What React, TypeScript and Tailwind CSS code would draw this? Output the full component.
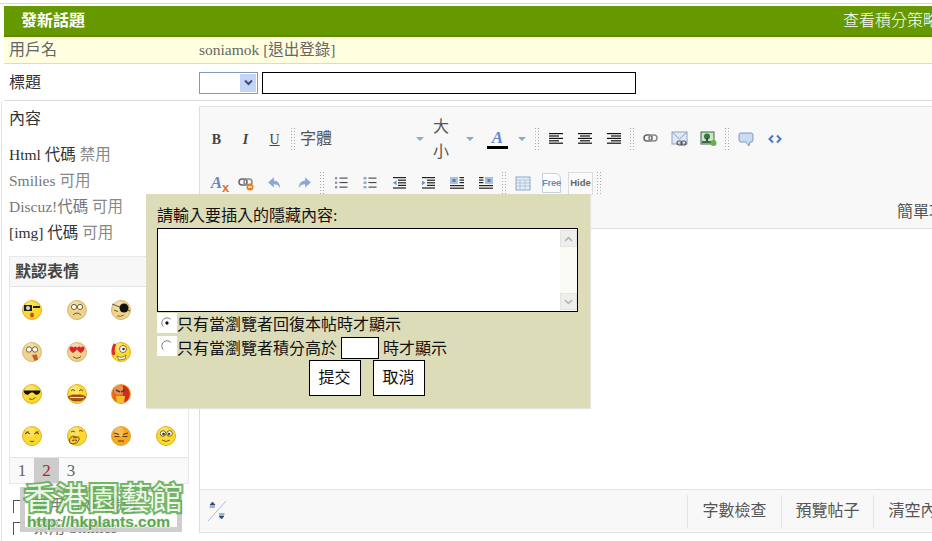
const sep = <span className="mx-[1px] h-[24px] w-[6px] shrink-0 bg-[radial-gradient(#aaa_0.7px,transparent_0.8px)] bg-[length:3px_3px]" />;

function Btn({ children }: { children?: React.ReactNode }) {
  return <div className="flex h-[24px] w-[29px] shrink-0 items-center justify-center">{children}</div>;
}

function Caret() {
  return <span className="h-0 w-0 border-x-[4px] border-t-[4px] border-x-transparent border-t-[#7fb0d0]" />;
}

function Lines({ rows }: { rows: [number, number][] }) {
  return (
    <svg width="16" height="14" viewBox="0 0 16 14">
      {rows.map(([x, w], i) => (
        <rect key={i} x={x} y={1 + i * 2.4} width={w} height="1.2" fill="#111" />
      ))}
    </svg>
  );
}

function Chain({ badge }: { badge?: boolean }) {
  return (
    <svg width="16" height="16" viewBox="0 0 16 16">
      <rect x="1" y="4" width="8" height="6" rx="3" fill="none" stroke="#666" strokeWidth="1.5" />
      <rect x="6" y="4" width="8" height="6" rx="3" fill="none" stroke="#888" strokeWidth="1.5" />
      {badge && <circle cx="12" cy="12" r="3.5" fill="#e8801c" />}
      {badge && <rect x="10" y="11.4" width="4" height="1.2" fill="#fff" />}
    </svg>
  );
}

function Arrow({ flip }: { flip?: boolean }) {
  return (
    <svg width="16" height="16" viewBox="0 0 14 14" className={flip ? "-scale-x-100" : ""}>
      <path d="M6 2 1 6.5 6 11V8.2c2.600 0 4.200.9 5.500 3.300C11.500 7.500 9.500 5 6 4.800Z" fill="#8aa8d8" />
    </svg>
  );
}

function ListIcon({ numbered }: { numbered?: boolean }) {
  return (
    <svg width="16" height="14" viewBox="0 0 16 14">
      {[1, 5.5, 10].map((y) => (
        <g key={y}>
          <rect x={numbered ? 2 : 1.5} y={y} width={numbered ? 2.2 : 3} height="2.4" fill={numbered ? "#8a94a8" : "#8fa8c8"} />
          <rect x="6.500" y={y + 0.6} width="8" height="1" fill="#333" />
        </g>
      ))}
    </svg>
  );
}

function IndentIcon({ out }: { out?: boolean }) {
  return (
    <svg width="16" height="14" viewBox="0 0 16 14">
      {[1, 3.6, 6.2, 8.8, 11.4].map((y, i) => (
        <rect key={y} x={i > 0 && i < 4 ? 7 : 2} y={y} width={i > 0 && i < 4 ? 8 : 13} height="1.2" fill="#222" />
      ))}
      <path d={out ? "M2 6.800 5.500 4.400v4.800Z" : "M5.500 6.800 2 4.400v4.800Z"} fill="#6c8ec0" />
    </svg>
  );
}

function FloatIcon({ right }: { right?: boolean }) {
  return (
    <svg width="16" height="14" viewBox="0 0 16 14">
      <rect x={right ? 7 : 1} y="1" width="8" height="7" fill="#a8c0e0" />
      <rect x={right ? 9.5 : 3.5} y="3" width="3" height="3" fill="#5c80b8" />
      {[1, 3.5, 6].map((y) => (
        <rect key={y} x={right ? 1 : 10.5} y={y} width="4.5" height="1.2" fill="#222" />
      ))}
      <rect x="1" y="9" width="14" height="1.2" fill="#222" />
      <rect x="1" y="11.6" width="14" height="1.2" fill="#222" />
    </svg>
  );
}

type Kind = "camera" | "sad" | "patch" | "tongue" | "love" | "hurt" | "shades" | "lips" | "angry" | "lash" | "hand" | "squint" | "smile";

function Smiley({ kind }: { kind: Kind }) {
  const pale = kind === "sad" || kind === "patch" || kind === "tongue" || kind === "love";
  const fill = pale ? "#efd28c" : kind === "angry" ? "#e8681c" : kind === "squint" ? "#f5a623" : "#fbd92e";
  return (
    <svg width="22" height="22" viewBox="0 0 22 22">
      <circle cx="11" cy="11" r="9.5" fill={fill} stroke={pale ? "#c8a860" : "#d8a010"} strokeWidth="0.8" />
      <circle cx="9" cy="7" r="5" fill="#fff" opacity="0.25" />
      {kind === "camera" && (
        <g>
          <rect x="3" y="6" width="8" height="6" fill="#222" />
          <circle cx="7" cy="9" r="2" fill="#ddd" />
          <path d="M12 7h7v2h-7Z" fill="#222" />
          <ellipse cx="11" cy="16" rx="2" ry="2.5" fill="#d8481c" />
        </g>
      )}
      {kind === "sad" && (
        <g fill="#fff" stroke="#6a5020" strokeWidth="0.9">
          <circle cx="8" cy="8" r="2.6" />
          <circle cx="14" cy="8" r="2.6" />
          <path d="M7 16q4-4 8 0" fill="none" />
        </g>
      )}
      {kind === "patch" && (
        <g>
          <path d="M2 5 20 12" stroke="#333" strokeWidth="0.8" />
          <circle cx="14" cy="9" r="4.5" fill="#111" />
          <path d="M4 11l4 1.5" stroke="#7a5020" strokeWidth="1" />
          <path d="M7 17q4 1 7-1" stroke="#a06020" fill="none" />
        </g>
      )}
      {kind === "tongue" && (
        <g>
          <circle cx="8" cy="8.5" r="2.7" fill="#fff" stroke="#6a5020" strokeWidth="0.9" />
          <circle cx="14" cy="8.5" r="2.7" fill="#fff" stroke="#6a5020" strokeWidth="0.9" />
          <path d="M11 14l5-.5 1 5-3.5 1.5Z" fill="#c85a30" />
        </g>
      )}
      {kind === "love" && (
        <g fill="#e0202c">
          <path d="M3.500 8c0-3 3-3 4-1.300C8.500 5 11 5 11 8c0 1.500-4 4-4 4S3.500 9.500 3.500 8Z" />
          <path d="M11 8c0-3 3-3 4-1.300C16 5 18.500 5 18.500 8c0 1.500-3.700 4-3.700 4S11 9.500 11 8Z" />
          <path d="M7 15.500q4 3.500 8 0" fill="none" stroke="#7a5020" strokeWidth="1" />
        </g>
      )}
      {kind === "hurt" && (
        <g>
          <path d="M5 3q-3 5-1 11" stroke="#e02c20" strokeWidth="3" fill="none" />
          <circle cx="13" cy="8" r="3.500" fill="#fff" stroke="#6a5020" strokeWidth="0.8" />
          <circle cx="13.500" cy="8" r="1.300" fill="#333" />
          <path d="M7 15q5 3 9-1l-1 4-6 1Z" fill="#fff" stroke="#6a5020" strokeWidth="0.7" />
        </g>
      )}
      {kind === "shades" && (
        <g>
          <path d="M2.500 7.500h17l-.8 2.500q-1.700 2.300-4.200 1.500L12 9.500h-2l-2.500 2q-2.500.8-4.200-1.500Z" fill="#111" />
          <path d="M8 16q4 1.500 6.500-1.500" stroke="#7a5020" fill="none" />
        </g>
      )}
      {kind === "lips" && (
        <g>
          <path d="M5 8q2-3 4 0M13 8q2-3 4 0" stroke="#6a5020" fill="none" />
          <path d="M2 14q4-3 9-2 5-1 9 2-4 5-9 4-5 1-9-4Z" fill="#a85020" stroke="#6a3010" strokeWidth="0.5" />
          <rect x="4" y="14" width="14" height="1" fill="#f8e0b0" />
        </g>
      )}
      {kind === "angry" && (
        <g>
          <path d="M13 2a9.500 9.500 0 0 1 0 18Z" fill="#d8281c" />
          <path d="M6 7l4 2M15 7l-4 2" stroke="#442" strokeWidth="1.500" />
          <path d="M6 13h9l-1 7H7Z" fill="#f5c030" />
        </g>
      )}
      {kind === "lash" && (
        <g stroke="#7a4010" fill="none">
          <path d="M4 9q2.500-3 5 0M13 9q2.500-3 5 0M5 6.500l.5 2M7 6l0 2M15 6.500l.5 2M17 6l-.5 2" />
          <path d="M9 16q2 1.500 4 0" />
        </g>
      )}
      {kind === "hand" && (
        <g stroke="#7a5010" fill="none">
          <path d="M5 7q2-2 4 0M13 6q2-1.500 4 .5" />
          <path d="M3 15q3-6 7-3 4-1 3 3-2 4-6 4t-4-4Z" fill="#f4c830" />
          <path d="M7 13q2-1 4 0M6 15.500q3-1 5 0" />
        </g>
      )}
      {kind === "squint" && (
        <g stroke="#5a3a10" strokeWidth="1.200" fill="none">
          <path d="M4 8l5 1.500M18 8l-5 1.500M4.500 11.500h5M12.500 11.500h5M8 16h6" />
        </g>
      )}
      {kind === "smile" && (
        <g stroke="#5a4010" strokeWidth="0.8">
          <circle cx="8" cy="8.500" r="2.800" fill="#fff" />
          <circle cx="14.500" cy="8.500" r="2.800" fill="#fff" />
          <circle cx="8.500" cy="9" r="1" fill="#222" />
          <circle cx="14" cy="9" r="1" fill="#222" />
          <path d="M7 15q4 3 8 0" fill="none" />
        </g>
      )}
    </svg>
  );
}

const smileys: (Kind | null)[] = ["camera", "sad", "patch", null, "tongue", "love", "hurt", null, "shades", "lips", "angry", null, "lash", "hand", "squint", "smile"];

export default function App() {
  return (
    <div className="relative h-[541px] w-[932px] overflow-hidden bg-white pt-[3px] font-['Liberation_Serif','Noto_Sans_CJK_TC',serif] text-[16px] text-[#444]">
      <div className="w-[970px]">
        <div className="h-[1px] w-full bg-[#dcdcc8]" />
        <div className="ml-[4px] mt-[2px]">
          <div className="flex h-[31px] items-center justify-between border-b-2 border-[#5d8a00] bg-[#669900] pl-[17px] pr-[31px] text-white">
            <b className="font-bold">發新話題</b>
            <span className="font-light">查看積分策略</span>
          </div>
          <div className="flex h-[27px] items-center border-b border-[#dcdcc8] bg-[#ffffe0] text-[#666]">
            <span className="w-[195px] pl-[5px]">用戶名</span>
            <span className="text-[15.5px]">soniamok [退出登錄]</span>
          </div>
          <div className="flex h-[37px] items-center border-b border-[#dcdcdc] pt-[1px]">
            <span className="w-[195px] pl-[5px] text-[#333]">標題</span>
            <div className="flex h-[22px] w-[59px] justify-end border border-[#7f9db9] bg-white p-[1px]">
              <div className="flex w-[16px] items-center justify-center bg-[#c3d5f5]">
                <svg width="9" height="7" viewBox="0 0 9 7">
                  <path d="M1 1.500 4.500 5 8 1.500" fill="none" stroke="#3a4f80" strokeWidth="2" />
                </svg>
              </div>
            </div>
            <input readOnly className="ml-[4px] h-[22px] w-[374px] border border-black bg-white" />
          </div>
        </div>

        <div className="ml-[1px] flex h-[440px] border-l border-[#e6e6d4] pl-[2px]">
          <div className="w-[195px] shrink-0">
            <div className="flex h-[35px] items-center pl-[5px] text-[#333]">內容</div>
            <div className="h-[6px]" />
            <div className="pl-[5px] text-[15.5px] leading-[26px]">
              <p className="h-[26px]"><span className="text-[#333]">Html 代碼</span> <span className="text-[#888]">禁用</span></p>
              <p className="h-[26px] text-[#777]">Smilies <span className="text-[#888]">可用</span></p>
              <p className="h-[26px] text-[#777]">Discuz!代碼 <span className="text-[#888]">可用</span></p>
              <p className="h-[26px]"><span className="text-[#333]">[img] 代碼</span> <span className="text-[#888]">可用</span></p>
            </div>
            <div className="ml-[5px] mt-[10px] w-[180px] border border-[#e8e8e8]">
              <div className="flex h-[30px] items-center border-b border-[#e4e4e4] bg-[#f7f7f7] pl-[5px] font-bold text-[#444]">默認表情</div>
              <div className="grid h-[170px] grid-cols-4 grid-rows-4 pt-[2px]">
                {smileys.map((k, i) => (
                  <div key={i} className="flex items-center justify-center">
                    {k && <Smiley kind={k} />}
                  </div>
                ))}
              </div>
              <div className="flex h-[26px] items-center border-t border-[#e4e4e4] bg-[#f9f9f9] text-[17px] text-[#666]">
                <span className="w-[24px] text-center">1</span>
                <span className="flex h-full w-[25px] items-center justify-center bg-[#cccccc] text-[#b02020]">2</span>
                <span className="w-[24px] text-center">3</span>
              </div>
            </div>
            <div className="mt-[11px] pl-[9px] text-[#444]">
              <div className="flex h-[22px] items-center gap-[8px]">
                <span className="h-[13px] w-[12px] border-l border-t border-[#555] bg-white" />
                <span>禁用 URL 識別</span>
              </div>
              <div className="flex h-[22px] items-center gap-[8px]">
                <span className="h-[13px] w-[12px] border-l border-t border-[#555] bg-white" />
                <span className="text-[#666]">禁用 Smilies</span>
              </div>
            </div>
          </div>

          <div className="mt-[5px] flex h-[427px] w-[771px] flex-col border border-r-0 border-[#e4e4e0] border-l-[#dddddd]">
            <div className="h-[122px] border-b border-[#e4e4dc] bg-[#f8f8f8] pl-[2px]">
              <div className="mt-[7px] flex h-[50px] items-center">
                <Btn><b className="text-[14px] text-[#444]">B</b></Btn>
                <Btn><b className="text-[14px] italic text-[#444]">I</b></Btn>
                <Btn><span className="text-[14px] text-[#444] underline">U</span></Btn>
                {sep}
                <div className="flex w-[136px] items-center pl-[3px]">
                  <span className="w-[116px] text-[#555]">字體</span>
                  <Caret />
                </div>
                <span className="w-[16px] text-center leading-[25px] text-[#555]">大小</span>
                <div className="ml-[16px] mr-[8px] flex w-[10px] justify-center"><Caret /></div>
                <Btn>
                  <span className="flex flex-col items-center">
                    <b className="text-[17px] italic leading-[15px] text-[#6a84c8]">A</b>
                    <span className="mt-[1px] h-[3px] w-[21px] bg-black" />
                  </span>
                </Btn>
                <div className="flex w-[20px] justify-center"><Caret /></div>
                <span className="w-[1px]" />
                {sep}
                <Btn><Lines rows={[[1, 14], [1, 10], [1, 14], [1, 10], [1, 14]]} /></Btn>
                <Btn><Lines rows={[[1, 14], [3, 10], [1, 14], [3, 10], [1, 14]]} /></Btn>
                <Btn><Lines rows={[[1, 14], [5, 10], [1, 14], [5, 10], [1, 14]]} /></Btn>
                {sep}
                <Btn><Chain /></Btn>
                <Btn>
                  <svg width="18" height="16" viewBox="0 0 18 16">
                    <rect x="1" y="1" width="15" height="12" fill="#dfe8f4" stroke="#8fa4bc" />
                    <path d="M1 1l7.500 7L16 1" fill="none" stroke="#8fa4bc" />
                    <rect x="6" y="10" width="5" height="4" rx="2" fill="none" stroke="#555" strokeWidth="1.200" />
                    <rect x="10" y="10" width="5" height="4" rx="2" fill="none" stroke="#555" strokeWidth="1.200" />
                  </svg>
                </Btn>
                <Btn>
                  <svg width="18" height="16" viewBox="0 0 18 16">
                    <rect x="1" y="1" width="13" height="12" fill="#cfe0cc" stroke="#3a6a44" />
                    <circle cx="7" cy="5.500" r="3" fill="#2e7a38" />
                    <rect x="6" y="7" width="2" height="4" fill="#444" />
                    <rect x="2" y="10" width="11" height="2" fill="#3a6a44" />
                    <circle cx="13.500" cy="12" r="3" fill="#6ab04a" />
                  </svg>
                </Btn>
                {sep}
                <Btn>
                  <svg width="16" height="15" viewBox="0 0 16 15">
                    <path d="M3 1h10a2 2 0 0 1 2 2v5a2 2 0 0 1-2 2h-1l-1 4-3-4H3a2 2 0 0 1-2-2V3a2 2 0 0 1 2-2Z" fill="#c8dcf4" stroke="#7e98b8" />
                  </svg>
                </Btn>
                <Btn>
                  <svg width="14" height="10" viewBox="0 0 14 10">
                    <path d="M5 1.500 1.500 5 5 8.500M9 1.500 12.500 5 9 8.500" fill="none" stroke="#4a78c0" strokeWidth="2" />
                  </svg>
                </Btn>
              </div>
              <div className="mt-[7px] flex h-[24px] items-center">
                <Btn>
                  <span className="relative">
                    <b className="text-[17px] italic leading-none text-[#6a84c8]">A</b>
                    <span className="absolute bottom-[1px] -right-[7px] font-['Liberation_Sans',sans-serif] text-[13px] font-bold leading-none text-[#e07030]">x</span>
                  </span>
                </Btn>
                <Btn><Chain badge /></Btn>
                <Btn><Arrow /></Btn>
                <Btn><Arrow flip /></Btn>
                {sep}
                <Btn><ListIcon numbered /></Btn>
                <Btn><ListIcon /></Btn>
                <Btn><IndentIcon out /></Btn>
                <Btn><IndentIcon /></Btn>
                <Btn><FloatIcon /></Btn>
                <Btn><FloatIcon right /></Btn>
                {sep}
                <Btn>
                  <svg width="16" height="15" viewBox="0 0 16 15">
                    <rect x="1" y="1" width="14" height="13" fill="#e4eef8" stroke="#8ca8c8" />
                    <path d="M1 4h14M1 7h14M1 10h14M5 4v10M10 4v10" stroke="#a4bcd8" strokeWidth="0.8" />
                  </svg>
                </Btn>
                <Btn>
                  <span className="flex h-[20px] w-[19px] items-center justify-center rounded-tr-[6px] border border-[#c4d0e0] bg-white font-['Liberation_Sans',sans-serif] text-[9.5px] font-bold leading-none tracking-[-0.3px] text-[#6c8cc4]">Free</span>
                </Btn>
                <div className="flex h-[24px] w-[29px] shrink-0 items-center justify-center">
                  <span className="flex h-[23px] w-[25px] items-center justify-center border border-[#dcdcdc] bg-[#fbfbfb] font-['Liberation_Sans',sans-serif] text-[9.5px] font-bold leading-none text-[#666]">Hide</span>
                </div>
                {sep}
              </div>
              <div className="flex h-[33px] items-center justify-end pr-[9px] text-[#555]">簡單功能</div>
            </div>
            <div className="flex-1 bg-white" />
            <div className="flex h-[43px] items-center border-t border-[#e4e4dc] bg-[#f8f8f8] pl-[7px] pr-[3px] text-[#555]">
              <svg width="20" height="24" viewBox="0 0 20 24">
                <path d="M1 22 19 2" stroke="#a8bcd8" />
                <path d="M3 6l2.500-3L8 6ZM2.500 8h5.500" fill="#2a4a78" stroke="#2a4a78" strokeWidth="0.8" />
                <path d="M12 17l2.500 3 2.500-3ZM12 15h5.500" fill="#2a4a78" stroke="#2a4a78" strokeWidth="0.8" />
              </svg>
              <div className="ml-auto flex h-[33px]">
                <span className="flex w-[94px] items-center justify-center border-l border-[#e4e4e4]">字數檢查</span>
                <span className="flex w-[92px] items-center justify-center border-l border-[#e4e4e4]">預覽帖子</span>
                <span className="flex w-[94px] items-center justify-center border-l border-[#e4e4e4]">清空內容</span>
              </div>
            </div>
          </div>
        </div>
      </div>

      {/* hide-content dialog */}
      <div className="absolute left-[146px] top-[194px] h-[214px] w-[444px] bg-[#dcdcb8] pl-[11px] pt-[10px] text-[#111] shadow-[1px_1px_1px_#e6e6e0]">
        <div className="flex h-[24px] items-center">請輸入要插入的隱藏內容:</div>
        <div className="flex h-[84px] w-[421px] border border-black bg-white">
          <textarea readOnly className="flex-1 resize-none bg-white outline-none" />
          <div className="flex w-[17px] flex-col justify-between bg-[#fbfbf6] py-[1px]">
            <div className="flex h-[17px] items-center justify-center border border-[#e4e4e4] bg-[#eeeeea]">
              <svg width="9" height="6" viewBox="0 0 9 6"><path d="M1 5l3.500-3.500L8 5" fill="none" stroke="#b0b0b0" strokeWidth="1.500" /></svg>
            </div>
            <div className="flex h-[17px] items-center justify-center border border-[#e4e4e4] bg-[#eeeeea]">
              <svg width="9" height="6" viewBox="0 0 9 6"><path d="M1 1l3.500 3.500L8 1" fill="none" stroke="#b0b0b0" strokeWidth="1.500" /></svg>
            </div>
          </div>
        </div>
        <div className="mt-[1px] flex h-[20px] items-start">
          <span className="flex h-[20px] w-[20px] items-center justify-center bg-white">
            <svg width="12" height="12" viewBox="0 0 13 13">
              <path d="M2.500 10.500a5.500 5.500 0 0 1 8-8" fill="none" stroke="#777" />
              <circle cx="6.500" cy="6.500" r="1.800" fill="#111" />
            </svg>
          </span>
          <span className="pt-[1px] leading-[22px]">只有當瀏覽者回復本帖時才顯示</span>
        </div>
        <div className="mt-[3px] flex h-[23px] items-center">
          <span className="flex h-[20px] w-[20px] items-center justify-center self-start bg-white">
            <svg width="12" height="12" viewBox="0 0 13 13">
              <path d="M2.500 10.500a5.500 5.500 0 0 1 8-8" fill="none" stroke="#777" />
            </svg>
          </span>
          <span className="pt-[2px]">只有當瀏覽者積分高於</span>
          <input readOnly className="mx-[4px] h-[22px] w-[38px] border border-black bg-white" />
          <span className="pt-[2px]">時才顯示</span>
        </div>
        <div className="mt-[1px] flex w-[421px] justify-center gap-[12px] pr-[2px]">
          <button className="h-[36px] w-[52px] border border-black bg-white">提交</button>
          <button className="h-[36px] w-[52px] border border-black bg-white">取消</button>
        </div>
      </div>

      {/* hkplants watermark */}
      <div className="absolute left-[20px] top-[487px] h-[45px] w-[162px] border-[5px] border-[#c9c9c9]/90 bg-white/30" />
      <div className="absolute left-[24px] top-[476px] whitespace-nowrap font-['Noto_Sans_CJK_TC',sans-serif] text-[31px] leading-[40px] tracking-[1px] text-[#f0f6ea] opacity-85 [-webkit-text-stroke:4px_#5cab50] [paint-order:stroke_fill]">
        香港園藝館
      </div>
      <div className="absolute left-[27px] top-[512px] whitespace-nowrap font-['Liberation_Sans',sans-serif] text-[15.5px] font-bold leading-[20px] text-[#4d9e40] opacity-90 [-webkit-text-stroke:1.500px_#e8f2e0] [paint-order:stroke_fill]">
        http://hkplants.com
      </div>
    </div>
  );
}
